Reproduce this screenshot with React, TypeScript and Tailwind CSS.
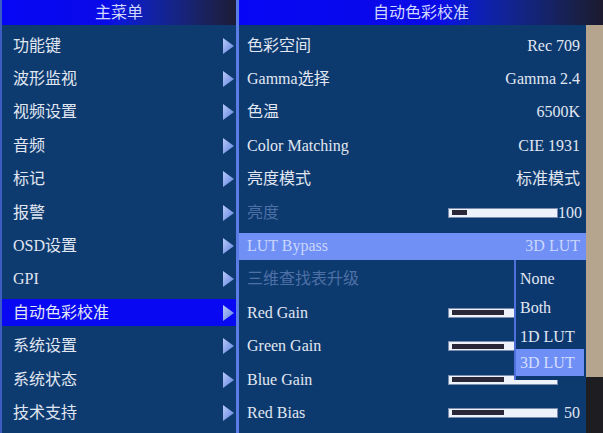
import React from "react";

const FONT = { fontFamily: '"Liberation Serif", "Noto Sans CJK SC", serif' };

function Arrow() {
  return (
    <svg width="11" height="16" viewBox="0 0 11 16">
      <defs>
        <linearGradient id="ag" x1="0" y1="0" x2="1" y2="1">
          <stop offset="0" stopColor="#b8cbf8" />
          <stop offset="1" stopColor="#5f80e0" />
        </linearGradient>
      </defs>
      <polygon points="0,0 11,8 0,16" fill="url(#ag)" />
    </svg>
  );
}

function Slider({ bar }: { bar: number }) {
  return (
    <div className="w-[110px] h-[10px] bg-[#eef2fa] border border-[#7d8db0] flex items-center px-[3px]">
      <div className="h-[5px] bg-[#2a2838]" style={{ width: bar }} />
    </div>
  );
}

const leftItems = [
  "功能键",
  "波形监视",
  "视频设置",
  "音频",
  "标记",
  "报警",
  "OSD设置",
  "GPI",
  "自动色彩校准",
  "系统设置",
  "系统状态",
  "技术支持",
];

type RItem = {
  label: string;
  value?: string;
  dim?: boolean;
  slider?: number;
  active?: boolean;
};

const rightItems: RItem[] = [
  { label: "色彩空间", value: "Rec 709" },
  { label: "Gamma选择", value: "Gamma 2.4" },
  { label: "色温", value: "6500K" },
  { label: "Color Matching", value: "CIE 1931" },
  { label: "亮度模式", value: "标准模式" },
  { label: "亮度", value: "100", dim: true, slider: 15 },
  { label: "LUT Bypass", value: "3D LUT", active: true },
  { label: "三维查找表升级", dim: true },
  { label: "Red Gain", value: "", slider: 52 },
  { label: "Green Gain", value: "", slider: 52 },
  { label: "Blue Gain", value: "", slider: 52 },
  { label: "Red Bias", value: "50", slider: 52 },
];

const dropItems = ["None", "Both", "1D LUT", "3D LUT"];

export default function App() {
  return (
    <div
      className="w-[603px] h-[433px] flex overflow-hidden bg-[#0d3a6e] text-[16px] text-[#e1e7f2]"
      style={FONT}
    >
      {/* Left panel */}
      <div className="w-[236px] flex flex-col border-l-2 border-[#3c5cc4] bg-[#0e3b6f]">
        <div className="h-[25px] shrink-0 flex items-center justify-center bg-gradient-to-r from-[#0606f6] via-[#0a0ae8] via-45% to-[#1d1b36] text-[#cfd7ff]">
          主菜单
        </div>
        <div className="mt-[4px] flex flex-col">
          {leftItems.map((t) => {
            const active = t === "自动色彩校准";
            return (
              <div key={t} className="h-[33.4px] flex items-center">
                <div
                  className={
                    "w-full h-[27px] flex items-center justify-between pl-[11px] pr-[2px] " +
                    (active ? "bg-[#0808f2]" : "")
                  }
                >
                  <span className="leading-none">{t}</span>
                  <Arrow />
                </div>
              </div>
            );
          })}
        </div>
      </div>

      {/* Separator */}
      <div className="w-[3px] bg-[#5b7be6]" />

      {/* Right panel */}
      <div className="flex-1 flex flex-col">
        <div className="h-[25px] shrink-0 flex items-center justify-center bg-gradient-to-r from-[#0606f6] via-[#0a0ae6] via-55% to-[#1b1a2e] text-[#cfd7ff]">
          自动色彩校准
        </div>
        <div className="flex-1 flex">
          <div className="w-[347px] relative bg-[#0d3a6e]">
            <div className="mt-[4px] flex flex-col">
              {rightItems.map((it) => (
                <div key={it.label} className="h-[33.4px] flex items-center">
                  <div
                    className={
                      "w-full h-[27px] flex items-center justify-between pl-[8px] pr-[6px] " +
                      (it.active ? "bg-[#7090f6] text-[#c9d6ff]" : "")
                    }
                  >
                    <span className={"leading-none " + (it.dim ? "text-[#4d70a6]" : "")}>
                      {it.label}
                    </span>
                    {it.slider !== undefined ? (
                      <div className="flex items-center">
                        <Slider bar={it.slider} />
                        <span className="w-[22px] text-right leading-none">{it.value}</span>
                      </div>
                    ) : (
                      <span className="leading-none">{it.value}</span>
                    )}
                  </div>
                </div>
              ))}
            </div>

            {/* Dropdown */}
            <div className="absolute left-[275px] top-[235px] w-[70px] h-[120px] bg-[#0c3870] border-l-2 border-[#4f6fdc] pt-[4px] flex flex-col z-10">
              {dropItems.map((d) => (
                <div
                  key={d}
                  className={
                    "flex items-center pl-[4px] leading-none " +
                    (d === "3D LUT"
                      ? "bg-[#6f8ff6] text-[#d4deff] mt-[-2px] h-[27px]"
                      : "h-[29px]")
                  }
                >
                  {d}
                </div>
              ))}
            </div>
          </div>
          <div className="flex-1 flex flex-col">
            <div className="h-[352px] bg-[#b5a58e]" />
            <div className="flex-1 bg-[#1e1e22]" />
          </div>
        </div>
      </div>
    </div>
  );
}
